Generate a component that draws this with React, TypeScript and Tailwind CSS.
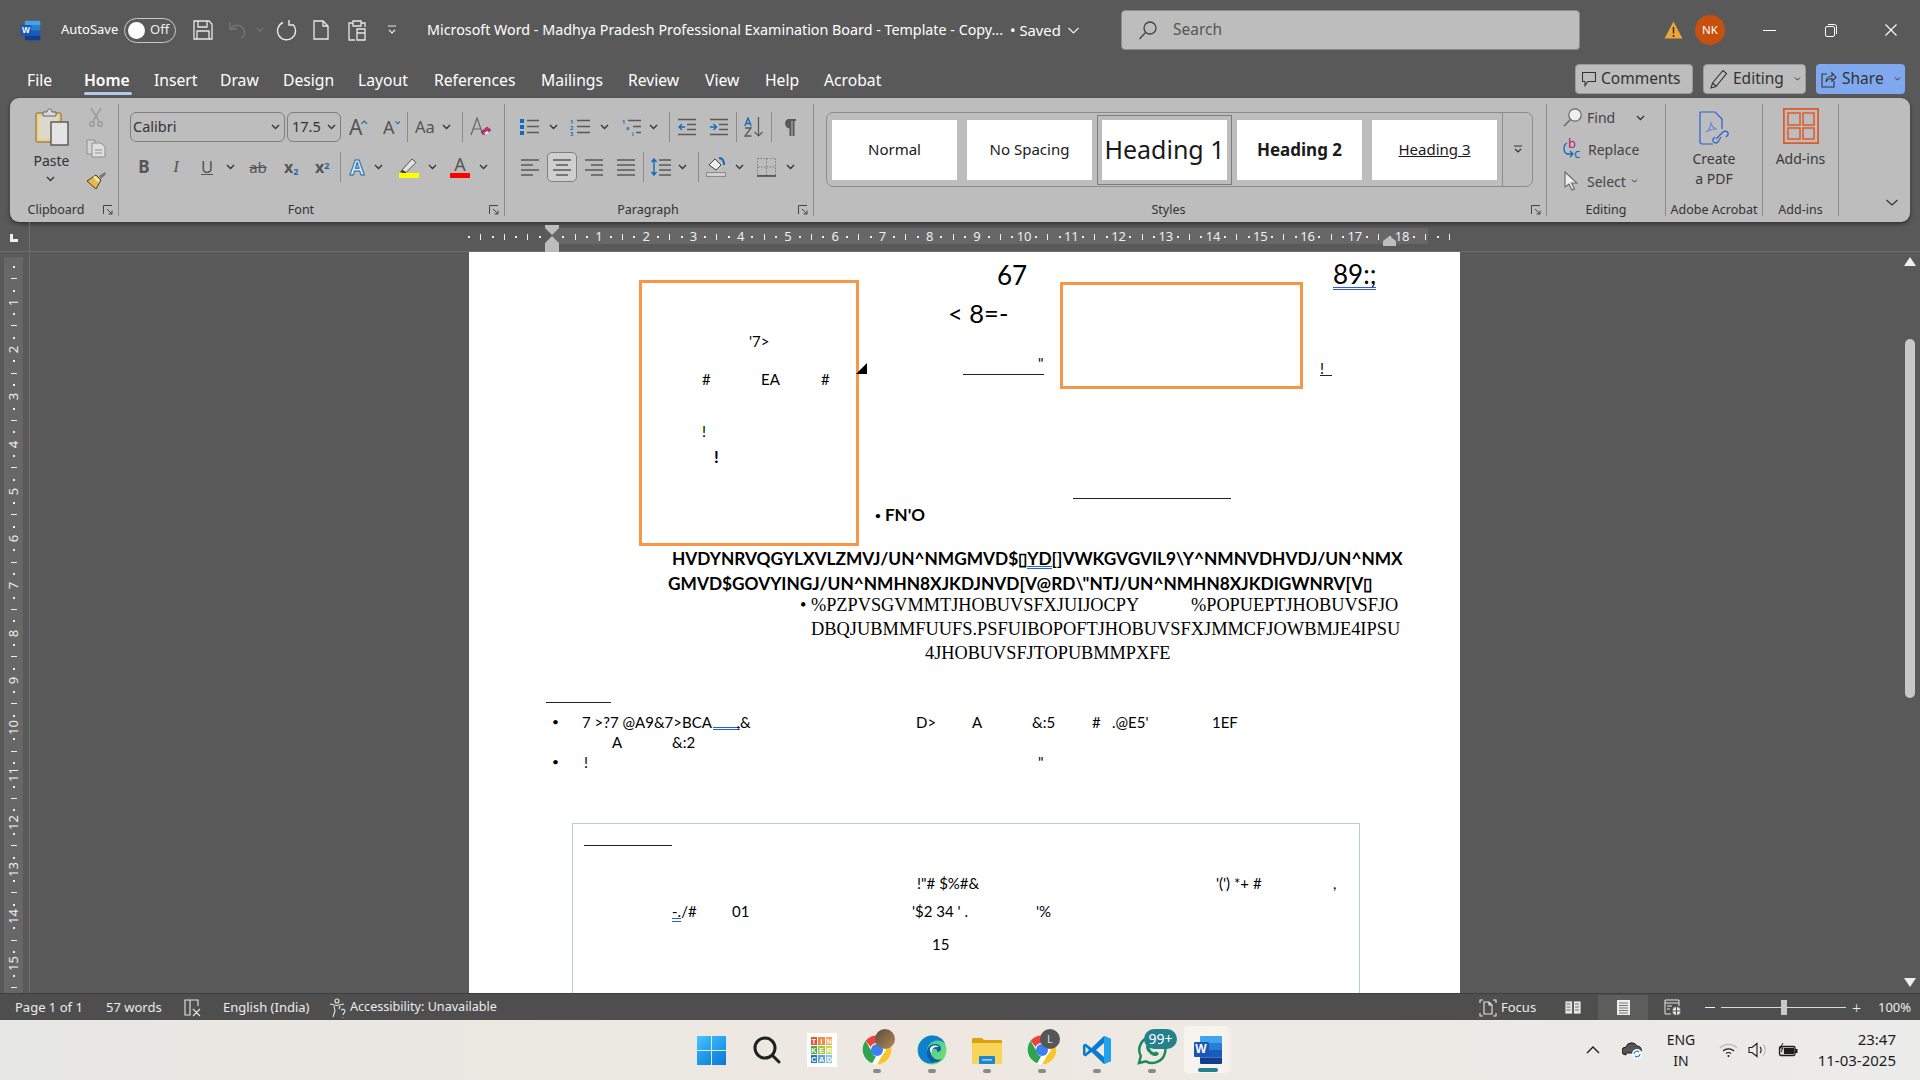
import React from "react";

const Chev = ({ className = "", color = "#333" }: { className?: string; color?: string }) => (
  <svg className={`shrink-0 ${className}`} width="9" height="6" viewBox="0 0 9 6">
    <path d="M1 1l3.5 3.5L8 1" fill="none" stroke={color} strokeWidth="1.3" />
  </svg>
);

const Sep = ({ className = "" }: { className?: string }) => (
  <div className={`w-px h-[30px] shrink-0 bg-[#8c8c8c] ${className}`} />
);

const Launcher = () => (
  <svg width="10" height="10" viewBox="0 0 10 10" className="shrink-0">
    <path d="M0.5 9V0.5H9M4 4l5 5M9 5.5V9H5.5" fill="none" stroke="#444" strokeWidth="1" />
  </svg>
);

const WordLogo = ({ size = 30 }: { size?: number }) => (
  <div className="relative shrink-0" style={{ width: size, height: size }}>
    <svg width={size} height={size} viewBox="0 0 30 30">
      <rect x="7" y="1" width="22" height="7" rx="1" fill="#41a5ee" />
      <rect x="7" y="8" width="22" height="7.5" fill="#2b7cd3" />
      <rect x="7" y="15" width="22" height="7.5" fill="#185abd" />
      <path d="M7 22.5h22V28a1 1 0 0 1-1 1H8a1 1 0 0 1-1-1z" fill="#103f91" />
      <rect x="1" y="7" width="15" height="15" rx="1.2" fill="#1a56b5" />
    </svg>
    <span
      className="absolute text-white font-bold font-['Liberation_Sans',sans-serif] leading-none left-[3%] top-[29%] w-[50%] text-center"
      style={{ fontSize: size * 0.4 }}
    >
      W
    </span>
  </div>
);

const Chrome = () => (
  <svg width="30" height="30" viewBox="0 0 30 30">
    <circle cx="15" cy="15" r="14.5" fill="#fff" />
    <path d="M15 .5A14.5 14.5 0 0 1 27.6 8H15a7 7 0 0 0-6.4 4L3.6 5.8A14.5 14.5 0 0 1 15 .5z" fill="#e8453c" />
    <path d="M3.6 5.8l6.2 10.8a5.6 5.6 0 0 0 4.2 5l-3.8 6.6A14.5 14.5 0 0 1 3.6 5.8z" fill="#2fa34f" />
    <path d="M27.6 8A14.5 14.5 0 0 1 15 29.5l6-10.4a6.5 6.5 0 0 0-.4-11.1z" fill="#f8c52c" />
    <circle cx="15" cy="15" r="6" fill="#3d7ff0" />
  </svg>
);

const Edge = () => (
  <svg width="30" height="30" viewBox="0 0 30 30">
    <defs>
      <linearGradient id="edgeA" x1="0" y1="0" x2="1" y2="1">
        <stop offset="0" stopColor="#2fc3a6" />
        <stop offset="1" stopColor="#7be26b" />
      </linearGradient>
    </defs>
    <circle cx="15" cy="15" r="14.5" fill="url(#edgeA)" />
    <path d="M1 15C1 7 8 .5 15 .5c6 0 11 3 13 8-3-3-8-4-12-2-4 2-6 5-6 9 0 5 3 10 8 12.5C8 30 1 24 1 15z" fill="#0f7fd0" />
    <path d="M10 17c0-5 4-8 8-8 4 0 6 2.500 6 5 0 2-2 3-4 3 1-3-2-4-4-3-2 1-3 4-1 7 2 3 6 5 10 3-2 2-5 4-9 3.500-4-1-6-6-6-10.500z" fill="#0d5fa8" />
    <path d="M14 12c2-2 6-2 8 0-2-.5-5 0-6.500 2-1 1.500-1.500 3-.5 5-2-2-3-5-1-7z" fill="#fff" />
  </svg>
);

const Folder = () => (
  <svg width="30" height="30" viewBox="0 0 30 30">
    <path d="M0 4a1 1 0 0 1 1-1h9l3 3h-13z" fill="#dfa10c" />
    <rect x="0" y="5" width="30" height="24" rx="1" fill="#dfa10c" />
    <rect x="0" y="8" width="30" height="21" rx="1" fill="#f7d45a" />
    <rect x="7" y="21" width="16" height="8" rx="1" fill="#1a87d6" />
    <rect x="10" y="24" width="10" height="1.6" fill="#fff" opacity="0.6" />
  </svg>
);

const VsCode = () => (
  <svg width="30" height="30" viewBox="0 0 30 30">
    <path d="M22 1L9.500 13 3.500 8.500 1 10v10l2.500 1.500 6-4.500L22 29l7-3V4z" fill="#0a7ccf" />
    <path d="M22 1l7 3v22l-7 3V21l-8-6 8-6z" fill="#21a3ec" />
    <path d="M22 8v14l-8-7z" fill="#f0e9e2" />
    <path d="M3.500 11.500v7L7 15z" fill="#f0e9e2" />
  </svg>
);

const WhatsApp = () => (
  <svg width="30" height="30" viewBox="0 0 30 30">
    <path d="M2 28l1.800-7A13 13 0 1 1 9 26.300z" fill="none" stroke="#1e8a5c" strokeWidth="2.500" />
    <path d="M10 9c1-1 2-1 2.500 0l1 2.500-1 1.500c1 2 2.500 3.500 4.500 4.500l1.500-1 2.500 1c1 .5 1 1.500 0 2.500-1.500 1.500-4 1.500-7-.5-3-2-5-5-5-7.500 0-1 .5-2 1-3z" fill="#1e8a5c" />
  </svg>
);

const Tinkercad = () => {
  const cells = [
    ["T", "#e8503a"], ["I", "#f08a3c"], ["N", "#f2a65a"],
    ["K", "#4fa845"], ["E", "#9cc93d"], ["R", "#c7d94f"],
    ["C", "#2a78b8"], ["A", "#62a6d8"], ["D", "#8cc2e8"],
  ] as const;
  return (
    <div className="w-[30px] h-[34px] bg-white grid grid-cols-3 grid-rows-3 gap-[1px] p-[4px] shrink-0">
      {cells.map(([t, c]) => (
        <span key={t} className="flex items-center justify-center text-white text-[7px] font-bold leading-none font-['Liberation_Sans',sans-serif]" style={{ backgroundColor: c }}>
          {t}
        </span>
      ))}
    </div>
  );
};

const TaskCell = ({ children, dot = true }: { children: React.ReactNode; dot?: boolean }) => (
  <div className="relative w-[55px] h-full flex items-center justify-center shrink-0">
    {children}
    {dot && <div className="absolute bottom-[7px] left-[24px] w-[8px] h-[4px] rounded-full bg-[#8c8a88]" />}
  </div>
);

const TABS = [
  ["File", "w-[57px]"], ["Home", "w-[70px]"], ["Insert", "w-[66px]"], ["Draw", "w-[63px]"], ["Design", "w-[75px]"],
  ["Layout", "w-[76px]"], ["References", "w-[107px]"], ["Mailings", "w-[87px]"], ["Review", "w-[77px]"], ["View", "w-[60px]"],
  ["Help", "w-[59px]"], ["Acrobat", "w-[70px]"],
];

function TitleBar() {
  return (
    <div className="flex items-center h-[60px] text-white shrink-0">
      <div className="ml-[20px]"><WordLogo size={21} /></div>
      <span className="ml-[20px] w-[54px] text-[13px] whitespace-nowrap">AutoSave</span>
      <div className="ml-[9px] w-[52px] h-[25px] rounded-full border border-[#c9c9c9] flex items-center pl-[3px] shrink-0">
        <div className="w-[17px] h-[17px] rounded-full bg-white" />
        <span className="ml-[5px] text-[13px] text-[#eee]">Off</span>
      </div>
      <svg className="ml-[17px] shrink-0" width="20" height="20" viewBox="0 0 20 20" fill="none" stroke="#e8e8e8" strokeWidth="1.3">
        <path d="M1 1h15l3 3v15H1zM5 1v6h9V1M4 19v-8h12v8" />
      </svg>
      <svg className="ml-[15px] shrink-0" width="20" height="20" viewBox="0 0 20 20" fill="none" stroke="#757575" strokeWidth="1.4">
        <path d="M2 2v7h7M2.500 9C5 5 11 4 14.500 7.500c3.500 3.500 2.500 8-1 11" />
      </svg>
      <Chev className="ml-[8px] w-[8px]" color="#757575" />
      <svg className="ml-[12px] shrink-0" width="21" height="22" viewBox="0 0 21 22" fill="none" stroke="#e8e8e8" strokeWidth="1.4">
        <path d="M13 1v5h5M17 5.500A9 9 0 1 1 7 3.500" />
      </svg>
      <svg className="ml-[16px] shrink-0" width="16" height="20" viewBox="0 0 16 20" fill="none" stroke="#e8e8e8" strokeWidth="1.3">
        <path d="M1 1h9l5 5v13H1zM10 1v5h5" />
      </svg>
      <svg className="ml-[19px] shrink-0" width="18" height="21" viewBox="0 0 18 21" fill="none" stroke="#e8e8e8" strokeWidth="1.3">
        <path d="M5 3H1v17h6M13 3h4v4M5 1h8v5H5zM9 9h8v11H9zM9 13h8" />
      </svg>
      <svg className="ml-[22px] shrink-0" width="8" height="10" viewBox="0 0 8 10" fill="none" stroke="#e8e8e8" strokeWidth="1.2">
        <path d="M0 1h8M1 5l3 3 3-3" />
      </svg>
      <div className="ml-[31px] w-[694px] flex items-center text-[14.3px] whitespace-nowrap shrink-0">
        <span className="w-[583px] shrink-0">Microsoft Word - Madhya Pradesh Professional Examination Board - Template - Copy...</span>
        <span className="w-[58px] shrink-0 text-[14.8px]">•&nbsp;Saved</span>
        <svg width="11" height="7" viewBox="0 0 11 7" fill="none" stroke="#eee" strokeWidth="1.2"><path d="M.5 1l5 5 5-5" /></svg>
      </div>
      <div className="w-[459px] h-[40px] rounded-[4px] bg-[#bdbdbd] border border-[#8b8b8b] flex items-center pl-[16px] shrink-0">
        <svg width="20" height="20" viewBox="0 0 20 20" fill="none" stroke="#444" strokeWidth="1.3">
          <circle cx="12" cy="8" r="6" />
          <path d="M7.500 12.500L1.500 19" />
        </svg>
        <span className="ml-[15px] text-[15.5px] text-[#555]">Search</span>
      </div>
      <svg className="ml-[84px] shrink-0" width="19" height="18" viewBox="0 0 19 18">
        <path d="M9.500 .5L18.500 17.500H.5z" fill="#eda63a" />
        <path d="M9.500 6v6.500M9.500 14v2" stroke="#3d2c10" strokeWidth="1.500" />
      </svg>
      <div className="ml-[12px] w-[30px] h-[30px] rounded-full bg-[#c8500f] flex items-center justify-center text-[11.5px] text-white shrink-0">NK</div>
      <div className="ml-[38px] w-[13px] h-px bg-white shrink-0" />
      <svg className="ml-[49px] shrink-0" width="12" height="13" viewBox="0 0 12 13" fill="none" stroke="#fff" strokeWidth="1">
        <rect x=".5" y="2.500" width="9" height="10" rx="1.500" />
        <path d="M3 .5h6.500a2 2 0 0 1 2 2V10" />
      </svg>
      <svg className="ml-[48px] shrink-0" width="12" height="12" viewBox="0 0 12 12" stroke="#fff" strokeWidth="1.1">
        <path d="M.5 .5l11 11M11.500 .5l-11 11" />
      </svg>
    </div>
  );
}

function TabRow() {
  return (
    <div className="flex h-[38px] pl-[27px] text-white text-[15.7px] shrink-0">
      {TABS.map(([t, w]) => (
        <div key={t} className={`relative h-full flex items-center pt-[3px] shrink-0 ${w} ${t === "Home" ? "font-semibold" : ""}`}>
          {t}
          {t === "Home" && <div className="absolute left-0 bottom-[3px] w-[48px] h-[3px] rounded-full bg-[#b5c9ee]" />}
        </div>
      ))}
      <div className="ml-auto flex mt-[4px] pr-[15px] gap-[10px] h-[30px] text-[15.5px] text-[#333]">
        <div className="w-[118px] rounded-[4px] bg-[#bdbdbd] border border-[#9a9a9a] flex items-center pl-[6px] gap-[5px]">
          <svg width="14" height="16" viewBox="0 0 14 16" fill="none" stroke="#333" strokeWidth="1.1"><path d="M.5 1.500h13v9H6l-3 4v-4H.5z" /></svg>
          Comments
        </div>
        <div className="w-[103px] rounded-[4px] bg-[#bdbdbd] border border-[#9a9a9a] flex items-center pl-[6px] gap-[5px]">
          <svg width="18" height="20" viewBox="0 0 18 20" fill="none" stroke="#333" strokeWidth="1.1"><path d="M1 19l1.500-5L13 1.500l3.500 3L6 17.500zM2.500 14L6 17" /></svg>
          Editing
          <Chev className="ml-[4px] scale-75" />
        </div>
        <div className="w-[89px] rounded-[4px] bg-[#7fa8ee] flex items-center pl-[5px] gap-[5px]">
          <svg width="16" height="18" viewBox="0 0 16 18" fill="none" stroke="#333" strokeWidth="1.1"><path d="M6 4H1v13h12v-6M5 12c0-4 3-6 6-6V3l4 4.500L11 11V8.500c-3 0-5 1-6 3.500z" /></svg>
          Share
          <Chev className="ml-[4px] scale-75" />
        </div>
      </div>
    </div>
  );
}

const GroupLabel = ({ text, box }: { text: string; box?: string }) => (
  <div className="mt-auto flex h-[12px] items-center text-[12.5px] leading-[12px] text-[#333]">
    <span className="flex-1 text-center whitespace-nowrap">{text}</span>
    {box && (
      <span className={`flex justify-end pr-[5px] shrink-0 ${box}`}>
        <Launcher />
      </span>
    )}
  </div>
);

function Clipboard() {
  return (
    <div className="w-[109px] flex flex-col border-r border-[#8c8c8c] shrink-0">
      <div className="flex">
        <div className="w-[74px] pl-[9px] pt-[4px] flex flex-col items-center shrink-0">
          <svg width="34" height="39" viewBox="0 0 34 39">
            <rect x="1" y="5" width="25" height="29" rx="1" fill="#f2cf7f" stroke="#7d6a3c" />
            <rect x="4" y="8" width="19" height="23" fill="#ddd8cc" />
            <path d="M8 8V4h4c0-4 5-4 5 0h4v4z" fill="#d8d8d8" stroke="#666" />
            <rect x="16" y="14" width="17" height="23" fill="#e4e4e4" stroke="#5d5d5d" strokeWidth="1.500" />
          </svg>
          <span className="mt-[4px] text-[14px] leading-[20px] text-[#333]">Paste</span>
          <Chev className="mt-[5px] mr-[3px]" />
        </div>
        <div className="w-[24px] pt-[3px] flex flex-col items-center shrink-0">
          <svg width="14" height="20" viewBox="0 0 14 20" fill="none" stroke="#8e8e8e" strokeWidth="1.100">
            <path d="M2 1l8 13M12 1L4 14" />
            <circle cx="3" cy="17" r="2.300" />
            <circle cx="11" cy="17" r="2.300" />
          </svg>
          <svg className="mt-[12px]" width="20" height="19" viewBox="0 0 20 19">
            <path d="M1 1h8v14H1z" fill="#d4d4d4" stroke="#8e8e8e" />
            <path d="M6 4h9l4 4v10H6z" fill="#dfdfdf" stroke="#8e8e8e" />
            <path d="M9 11h7M9 14h7" stroke="#8e8e8e" />
          </svg>
          <svg className="mt-[13px]" width="20" height="18" viewBox="0 0 20 18">
            <path d="M13 5L19 1l1 2-5 5z" fill="#777" />
            <path d="M1 10l9-6 5 5-5 9z" fill="#e6b94a" stroke="#4a3a18" />
            <path d="M8 5.500l5 5" stroke="#eee" strokeWidth="2" />
          </svg>
        </div>
      </div>
      <GroupLabel text="Clipboard" box="w-[16px]" />
    </div>
  );
}

function FontGroup() {
  return (
    <div className="w-[386px] flex flex-col border-r border-[#8c8c8c] shrink-0 text-[#555]">
      <div className="pt-[8px] flex flex-col gap-[10px]">
        <div className="flex items-center h-[30px]">
          <div className="ml-[11px] w-[155px] h-[30px] rounded-[6px] border border-[#808080] flex items-center px-[2px] justify-between shrink-0">
            <span className="text-[14.5px] text-[#333]">Calibri</span>
            <Chev className="mr-[2px]" />
          </div>
          <div className="ml-[2px] w-[54px] h-[30px] rounded-[6px] border border-[#808080] flex items-center pl-[4px] pr-[2px] justify-between shrink-0">
            <span className="text-[14.5px] text-[#333]">17.5</span>
            <Chev className="mr-[2px]" />
          </div>
          <div className="ml-[8px] w-[19px] flex items-start shrink-0">
            <span className="text-[21px] leading-none">A</span>
            <svg className="mt-[3px] ml-[-1px]" width="7" height="5" viewBox="0 0 7 5"><path d="M.5 4l3-3 3 3" fill="none" stroke="#1f6aa8" strokeWidth="1.300" /></svg>
          </div>
          <div className="ml-[15px] w-[17px] flex items-start shrink-0">
            <span className="text-[18px] leading-none">A</span>
            <svg className="mt-[2px]" width="7" height="5" viewBox="0 0 7 5"><path d="M.5 1l3 3 3-3" fill="none" stroke="#1f6aa8" strokeWidth="1.300" /></svg>
          </div>
          <Sep className="ml-[7px]" />
          <span className="ml-[7px] w-[20px] text-[16.5px] shrink-0 whitespace-nowrap">Aa</span>
          <Chev className="ml-[7px]" />
          <Sep className="ml-[11px]" />
          <svg className="ml-[7px] shrink-0" width="21" height="20" viewBox="0 0 21 20">
            <path d="M1 18L7 1l6 17M3.500 12h7" fill="none" stroke="#666" strokeWidth="1.200" />
            <path d="M11 15l6-5 4 3-6 5z" fill="#c0307e" stroke="#7c1c50" strokeWidth=".6" />
            <path d="M14 16.500l3-2.500 2 1.500-3 2.500z" fill="#eee" />
          </svg>
        </div>
        <div className="flex items-center h-[30px]">
          <span className="ml-[18px] w-[14px] text-center text-[17px] font-bold shrink-0">B</span>
          <span className="ml-[18px] w-[14px] text-center text-[17px] italic shrink-0 font-['Liberation_Serif',serif]">I</span>
          <span className="ml-[17px] w-[14px] text-center text-[16.5px] underline shrink-0">U</span>
          <Chev className="ml-[12px]" />
          <span className="ml-[13px] w-[20px] text-center text-[15px] line-through shrink-0">ab</span>
          <span className="ml-[16px] w-[16px] text-[16px] font-bold shrink-0 whitespace-nowrap">x<sub className="text-[9px] text-[#1f6aa8]">2</sub></span>
          <span className="ml-[15px] w-[16px] text-[16px] font-bold shrink-0 whitespace-nowrap">x<sup className="text-[9px] text-[#1f6aa8]">2</sup></span>
          <Sep className="ml-[9px]" />
          <span className="ml-[7px] w-[18px] text-center text-[21px] font-bold text-[#dfeaf5] leading-none shrink-0 [-webkit-text-stroke:1px_#1f6aa8]">A</span>
          <Chev className="ml-[8px]" />
          <svg className="ml-[16px] shrink-0" width="20" height="21" viewBox="0 0 20 21">
            <path d="M3 13L13 2l4 3.500L7 15.500z" fill="#e2e2e2" stroke="#555" />
            <path d="M1 15l2-2 4 2.500-1 1z" fill="#333" />
            <rect x="0" y="16" width="20" height="5" fill="#ffff00" />
          </svg>
          <Chev className="ml-[9px]" />
          <div className="ml-[13px] w-[20px] flex flex-col items-center shrink-0">
            <span className="text-[18px] leading-[17px]">A</span>
            <div className="w-[20px] h-[5px] bg-[#ff0000]" />
          </div>
          <Chev className="ml-[9px]" />
        </div>
      </div>
      <GroupLabel text="Font" box="w-[21px]" />
    </div>
  );
}

function ParagraphGroup() {
  return (
    <div className="w-[309px] flex flex-col border-r border-[#8c8c8c] shrink-0 text-[#555]">
      <div className="pt-[8px] flex flex-col gap-[10px]">
        <div className="flex items-center h-[30px]">
          <svg className="ml-[15px] shrink-0" width="19" height="18" viewBox="0 0 19 18">
            <path d="M0 1h4v4H0zM0 7h4v4H0zM0 13h4v4H0z" fill="#0f6cbd" />
            <path d="M7 2.500h12M7 8.500h12M7 14.500h12" stroke="#595959" strokeWidth="1.500" />
          </svg>
          <Chev className="ml-[10px]" />
          <svg className="ml-[12px] shrink-0" width="20" height="18" viewBox="0 0 20 18">
            <text x="0" y="5.500" fontSize="5.500" fontWeight="700" fill="#0f6cbd">1</text>
            <text x="0" y="11.500" fontSize="5.500" fontWeight="700" fill="#0f6cbd">2</text>
            <text x="0" y="17.500" fontSize="5.500" fontWeight="700" fill="#0f6cbd">3</text>
            <path d="M7 2.500h13M7 8.500h13M7 14.500h13" stroke="#595959" strokeWidth="1.500" />
          </svg>
          <Chev className="ml-[10px]" />
          <svg className="ml-[13px] shrink-0" width="19" height="18" viewBox="0 0 19 18">
            <text x="0" y="5.500" fontSize="5.500" fontWeight="700" fill="#0f6cbd">1</text>
            <text x="4" y="11.500" fontSize="5.500" fontWeight="700" fill="#0f6cbd">a</text>
            <text x="10" y="17.500" fontSize="5.500" fontWeight="700" fill="#0f6cbd">i</text>
            <path d="M6 2.500h13M11 8.500h8M14 14.500h5" stroke="#595959" strokeWidth="1.500" />
          </svg>
          <Chev className="ml-[8px]" />
          <Sep className="ml-[11px]" />
          <svg className="ml-[8px] shrink-0" width="18" height="18" viewBox="0 0 18 18">
            <path d="M0 1.500h18M9 6.500h9M9 11.500h9M0 16.500h18" stroke="#595959" strokeWidth="1.500" />
            <path d="M7 9H1M4 6L1 9l3 3" fill="none" stroke="#0f6cbd" strokeWidth="1.300" />
          </svg>
          <svg className="ml-[14px] shrink-0" width="18" height="18" viewBox="0 0 18 18">
            <path d="M0 1.500h18M9 6.500h9M9 11.500h9M0 16.500h18" stroke="#595959" strokeWidth="1.500" />
            <path d="M0 9h6M3.500 6l3 3-3 3" fill="none" stroke="#0f6cbd" strokeWidth="1.300" />
          </svg>
          <Sep className="ml-[8px]" />
          {/* sort button, same idea as lucide's arrow-down-a-z */}
          <svg className="ml-[7px] shrink-0" width="20" height="20" viewBox="0 0 20 20" fill="none" strokeWidth="1.300">
            <path d="M.8 9L4 1l3.200 8M1.800 6.500h4.400" stroke="#0f6cbd" />
            <path d="M1 11h6L1 19h6.500" stroke="#595959" />
            <path d="M14.500 0v19M10.500 15l4 4 4-4" stroke="#595959" strokeWidth="1.200" />
          </svg>
          <Sep className="ml-[7px]" />
          <svg className="ml-[10px] shrink-0" width="14" height="17" viewBox="0 0 14 17">
            <path d="M6 0h8v2h-1.500v15h-2V2h-1v15h-2V9.500A5 5 0 0 1 6 0z" fill="#595959" />
          </svg>
        </div>
        <div className="flex items-center h-[30px]">
          <svg className="ml-[16px] shrink-0" width="18" height="18" viewBox="0 0 18 18">
            <path d="M0 2h18M0 7h12M0 12h18M0 17h12" stroke="#595959" strokeWidth="1.500" />
          </svg>
          <div className="ml-[8px] w-[30px] h-[30px] rounded-[5px] border border-[#808080] bg-[#cfcfcf] flex items-center justify-center shrink-0">
            <svg width="18" height="18" viewBox="0 0 18 18">
              <path d="M0 2h18M3 7h12M0 12h18M3 17h12" stroke="#595959" strokeWidth="1.500" />
            </svg>
          </div>
          <svg className="ml-[8px] shrink-0" width="18" height="18" viewBox="0 0 18 18">
            <path d="M0 2h18M6 7h12M0 12h18M6 17h12" stroke="#595959" strokeWidth="1.500" />
          </svg>
          <svg className="ml-[14px] shrink-0" width="18" height="18" viewBox="0 0 18 18">
            <path d="M0 2h18M0 7h18M0 12h18M0 17h18" stroke="#595959" strokeWidth="1.500" />
          </svg>
          <Sep className="ml-[8px]" />
          <svg className="ml-[7px] shrink-0" width="20" height="18" viewBox="0 0 20 18">
            <path d="M8 2h12M8 7h12M8 12h12M8 17h12" stroke="#595959" strokeWidth="1.500" />
            <path d="M3 1v16M.5 4L3 1l2.500 3M.5 14L3 17l2.500-3" fill="none" stroke="#0f6cbd" strokeWidth="1.400" />
          </svg>
          <Chev className="ml-[7px]" />
          <Sep className="ml-[11px]" />
          <svg className="ml-[7px] shrink-0" width="20" height="20" viewBox="0 0 20 20">
            <path d="M3 8l6-6 6 6-5 5z" fill="#eee" stroke="#444" />
            <path d="M13 1c3 0 5 2 5 7" fill="none" stroke="#0f6cbd" strokeWidth="2" />
            <rect x=".5" y="15.500" width="19" height="4" fill="#cfcfcf" stroke="#8c8c8c" />
          </svg>
          <Chev className="ml-[9px]" />
          <svg className="ml-[13px] shrink-0" width="19" height="19" viewBox="0 0 19 19" fill="none">
            <rect x=".5" y=".5" width="18" height="17" stroke="#7a7a7a" strokeDasharray="1.500 1.500" />
            <path d="M9.500 1v17M1 9h18" stroke="#7a7a7a" strokeDasharray="1.500 1.500" />
            <path d="M0 18h19" stroke="#444" strokeWidth="1.500" />
          </svg>
          <Chev className="ml-[10px]" />
        </div>
      </div>
      <GroupLabel text="Paragraph" box="w-[22px]" />
    </div>
  );
}

const STYLE_CELLS = [
  { label: "Normal", cls: "text-[15px]" },
  { label: "No Spacing", cls: "text-[15px]" },
  { label: "Heading 1", cls: "text-[25px] outline outline-[1.5px] outline-offset-4 outline-[#7d7d7d]" },
  { label: "Heading 2", cls: "text-[17px] font-bold" },
  { label: "Heading 3", cls: "text-[15px] underline" },
];

function StylesGroup() {
  return (
    <div className="w-[733px] flex flex-col border-r border-[#8c8c8c] shrink-0">
      <div className="pt-[8px] pl-[12px]">
        <div className="w-[707px] h-[75px] rounded-[7px] border border-[#8c8c8c] flex items-center pl-[5px]">
          <div className="flex gap-[10px]">
            {STYLE_CELLS.map((s) => (
              <div key={s.label} className={`w-[125px] h-[60px] bg-white flex items-center justify-center text-[#1a1a1a] whitespace-nowrap ${s.cls}`}>
                {s.label}
              </div>
            ))}
          </div>
          <div className="ml-[5px] flex-1 h-full border-l border-[#8c8c8c] flex items-center justify-center">
            <svg width="10" height="9" viewBox="0 0 10 9" fill="none" stroke="#333" strokeWidth="1.200"><path d="M1 1h8M2 4l3 3 3-3" /></svg>
          </div>
        </div>
      </div>
      <GroupLabel text="Styles" box="w-[23px]" />
    </div>
  );
}

function EditingGroup() {
  return (
    <div className="w-[119px] flex flex-col border-r border-[#8c8c8c] shrink-0 text-[14px] text-[#444]">
      <div className="flex items-center h-[27px] pl-[16px]">
        <svg className="shrink-0" width="19" height="19" viewBox="0 0 19 19">
          <circle cx="12" cy="7" r="6.200" fill="#eee" stroke="#666" strokeWidth="1.200" />
          <path d="M7.500 11.500L1 18" stroke="#666" strokeWidth="1.500" />
        </svg>
        <span className="ml-[5px] w-[49px] shrink-0">Find</span>
        <Chev />
      </div>
      <div className="flex items-center h-[28px] mt-[4px] pl-[15px]">
        <div className="relative w-[20px] h-[20px] shrink-0">
          <span className="absolute left-[6px] top-[-6px] text-[13px] text-[#b0267a] leading-[20px]">b</span>
          <span className="absolute left-[12px] top-[4px] text-[13px] text-[#0f6cbd] leading-[20px]">c</span>
          <svg className="absolute left-0 top-[3px]" width="13" height="16" viewBox="0 0 13 16" fill="none" stroke="#0f6cbd" strokeWidth="1.300"><path d="M5 1C1 3 1 10 5 12h6M8 9l3 3-3 3" /></svg>
        </div>
        <span className="ml-[6px]">Replace</span>
      </div>
      <div className="flex items-center h-[28px] mt-[4px] pl-[17px]">
        <svg className="shrink-0" width="14" height="20" viewBox="0 0 14 20">
          <path d="M1 1v15l4-3 3 6 2.500-1-3-6H13z" fill="#eee" stroke="#666" strokeWidth="1.100" />
        </svg>
        <span className="ml-[9px]">Select</span>
        <Chev className="ml-[4px] scale-75" />
      </div>
      <GroupLabel text="Editing" />
    </div>
  );
}

function RulerTop() {
  const cells = Array.from({ length: 84 }, (_, i) => i - 7);
  return (
    <div className="relative flex h-[30px] border-b border-[#6e6e6e] shrink-0">
      <div className="w-[30px] border-r border-[#6e6e6e] shrink-0 pl-[10px] pt-[12px]">
        <div className="w-[8px] h-[8px] border-l-[3px] border-b-[3px] border-[#eee]" />
      </div>
      <div className="absolute left-[551px] top-[6px] w-[877px] h-[16px] bg-[#676767]" />
      <div className="relative flex items-center pl-[433px] text-[#eee] text-[13px] leading-none">
        {cells.map((r) => (
          <div key={r} className="w-[11.82px] flex items-center justify-center shrink-0">
            {r === 0 ? null : r % 4 === 0 && r > 0 && r <= 72 ? (
              <span>{r / 4}</span>
            ) : r % 2 === 0 ? (
              <div className="w-px h-[6px] bg-[#eee]" />
            ) : (
              <div className="w-[2px] h-[2px] bg-[#eee]" />
            )}
          </div>
        ))}
      </div>
      <svg className="absolute left-[545px] top-[3px]" width="14" height="27" viewBox="0 0 14 27" fill="#bdbdbd">
        <path d="M0 0h14v3L7 10 0 3zM7 11l7 7v5H0v-5z" />
        <rect x="0" y="21" width="14" height="6" />
      </svg>
      <svg className="absolute left-[1383px] top-[14px]" width="13" height="10" viewBox="0 0 13 10" fill="#bdbdbd">
        <path d="M6.500 0L13 5v5H0V5z" />
      </svg>
    </div>
  );
}

function RulerLeft() {
  const cells = Array.from({ length: 62 }, (_, i) => i + 1);
  return (
    <div className="w-[30px] border-r border-[#6e6e6e] pl-[4px] pt-[5px] shrink-0 flex flex-col">
      <div className="w-[19px] flex-1 bg-[#676767] pt-[4px] overflow-hidden flex flex-col items-center text-[#eee] text-[13px] leading-none">
        {cells.map((r) => (
          <div key={r} className="h-[11.82px] w-full flex items-center justify-center shrink-0">
            {r % 4 === 0 ? (
              <span className="-rotate-90">{r / 4}</span>
            ) : r % 2 === 0 ? (
              <div className="w-[6px] h-px bg-[#eee]" />
            ) : (
              <div className="w-[2px] h-[2px] bg-[#eee]" />
            )}
          </div>
        ))}
      </div>
    </div>
  );
}

const Rule = ({ className = "" }: { className?: string }) => <div className={`h-px bg-[#222] shrink-0 ${className}`} />;

const DoubleLine = "border-b-[3px] border-double border-[#2a5fd0]";

function Page() {
  return (
    <div className="w-[991px] ml-[439px] bg-white text-black font-['Lato',sans-serif] text-[15px] flex flex-col overflow-hidden whitespace-pre shrink-0">
      {/* floating frames at the top */}
      <div className="flex h-[294px] shrink-0">
        <div className="relative ml-[170px] mt-[28px] w-[220px] h-[266px] border-[3px] border-[#f79646] shrink-0 flex flex-col">
          <div className="h-[18px] mt-[47px] pl-[107px]">'7&gt;</div>
          <div className="h-[18px] mt-[20px] pl-[60px] flex">
            <span className="w-[59px]">#</span>
            <span className="w-[60px]">EA</span>
            <span>#</span>
          </div>
          <div className="h-[18px] mt-[34px] pl-[60px]">!</div>
          <div className="h-[18px] mt-[6px] pl-[72px] font-bold text-[17px]">!</div>
          <svg className="absolute left-[214px] top-[80px]" width="11" height="11" viewBox="0 0 11 11"><path d="M11 0v11H0z" fill="#000" /></svg>
        </div>
        <div className="w-[201px] shrink-0 flex flex-col">
          <div className="h-[46px] pl-[138px] text-[26px] leading-[46px]">67</div>
          <div className="h-[30px] pl-[89px] text-[25.5px] leading-[30px]">&lt; 8=-</div>
          <div className="h-[14px] mt-[28px] pl-[179px] leading-[14px]">"</div>
          <Rule className="ml-[104px] w-[81px] mt-[4px]" />
          <div className="h-[20px] mt-[130px] pl-[16px] font-bold text-[17px] leading-[20px] flex items-center">
            <span className="w-[10px] text-[10px]">•</span>
            <span>FN'O</span>
          </div>
        </div>
        <div className="w-[243px] shrink-0 flex flex-col">
          <div className="mt-[30px] h-[107px] border-[3px] border-[#f79646] shrink-0" />
          <Rule className="ml-[13px] w-[158px] mt-[109px]" />
        </div>
        <div className="flex flex-col">
          <div className="h-[46px] pl-[30px] leading-[44px] text-[26px]">
            <span className={`inline-block leading-[26px] ${DoubleLine}`}>89:;</span>
          </div>
          <div className="mt-[64px] ml-[17px] h-[14px] w-[12px] border-b border-[#222] leading-[12px]">!</div>
        </div>
      </div>

      <div className="mt-[1px] h-[25px] pl-[203px] font-bold text-[17.3px] leading-[23px] flex">
        <span>HVDYNRVQGYLXVLZMVJ/UN^NMGMVD$▯</span>
        <span className={`inline-block h-[22px] ${DoubleLine}`}>YD</span>
        <span>[]VWKGVGVIL9\Y^NMNVDHVDJ/UN^NMX</span>
      </div>
      <div className="h-[23px] pl-[199px] font-bold text-[17.3px] leading-[23px]">GMVD$GOVYINGJ/UN^NMHN8XJKDJNVD[V@RD\"NTJ/UN^NMHN8XJKDIGWNRV[V▯</div>

      <div className="mt-[-1px] h-[24px] pl-[331px] font-['Liberation_Serif',serif] text-[18.3px] leading-[23px] flex">
        <span className="w-[391px] shrink-0">• %PZPVSGVMMTJHOBUVSFXJUIJOCPY</span>
        <span>%POPUEPTJHOBUVSFJO</span>
      </div>
      <div className="h-[23px] pl-[342px] font-['Liberation_Serif',serif] text-[18.4px] leading-[23px]">DBQJUBMMFUUFS.PSFUIBOPOFTJHOBUVSFXJMMCFJOWBMJE4IPSU</div>
      <div className="mt-[1px] h-[23px] pl-[456px] font-['Liberation_Serif',serif] text-[18.3px] leading-[23px]">4JHOBUVSFJTOPUBMMPXFE</div>

      <Rule className="mt-[37px] ml-[77px] w-[65px]" />

      <div className="mt-[9px] h-[20px] pl-[83px] leading-[20px] flex">
        <span className="w-[30px] shrink-0 text-[12px]">•</span>
        <span className="w-[131px] shrink-0">7 &gt;?7 @A9&amp;7&gt;BCA</span>
        <span className={`w-[27px] h-[18px] shrink-0 text-right ${DoubleLine}`}>,</span>
        <span className="w-[176px] shrink-0">&amp;</span>
        <span className="w-[56px] shrink-0">D&gt;</span>
        <span className="w-[60px] shrink-0">A</span>
        <span className="w-[60px] shrink-0">&amp;:5</span>
        <span className="w-[20px] shrink-0">#</span>
        <span className="w-[100px] shrink-0">.@E5'</span>
        <span>1EF</span>
      </div>
      <div className="h-[20px] pl-[143px] leading-[20px] flex">
        <span className="w-[60px] shrink-0">A</span>
        <span>&amp;:2</span>
      </div>
      <div className="h-[20px] pl-[83px] leading-[20px] flex">
        <span className="w-[32px] shrink-0 text-[12px]">•</span>
        <span className="w-[454px] shrink-0">!</span>
        <span>"</span>
      </div>

      <div className="mt-[51px] ml-[103px] w-[788px] flex-1 border border-b-0 border-[#b5cfd6] flex flex-col">
        <Rule className="ml-[11px] w-[88px] mt-[21px]" />
        <div className="mt-[27px] h-[20px] pl-[344px] leading-[20px] flex">
          <span className="w-[299px] shrink-0">!"# $%#&amp;</span>
          <span className="w-[117px] shrink-0">'(') *+ #</span>
          <span>,</span>
        </div>
        <div className="mt-[8px] h-[20px] pl-[99px] leading-[20px] flex">
          <span className="w-[60px] shrink-0">
            <span className="underline decoration-[#2a5fd0] decoration-double">-.</span>/#
          </span>
          <span className="w-[180px] shrink-0">01</span>
          <span className="w-[124px] shrink-0">'$2 34 ' .</span>
          <span>'%</span>
        </div>
        <div className="mt-[13px] h-[20px] pl-[359px] leading-[20px]">15</div>
      </div>
    </div>
  );
}

function Scrollbar() {
  return (
    <div className="ml-auto w-[20px] shrink-0 flex flex-col items-center">
      <svg className="mt-[5px]" width="12" height="10" viewBox="0 0 12 10"><path d="M6 0l6 9H0z" fill="#eee" /></svg>
      <div className="mt-[72px] w-[10px] h-[359px] rounded-full bg-[#c8c8c8]" />
      <svg className="mt-auto mb-[6px]" width="12" height="10" viewBox="0 0 12 10"><path d="M6 10l6-9H0z" fill="#eee" /></svg>
    </div>
  );
}

function StatusBar() {
  return (
    <div className="flex items-center h-[27px] pt-[1px] bg-[#4e4e4e] text-[#ececec] text-[13px] border-t border-[#3e3e3e] shrink-0 whitespace-nowrap">
      <span className="ml-[15px] w-[91px] shrink-0">Page 1 of 1</span>
      <span className="w-[78px] shrink-0">57 words</span>
      <svg className="shrink-0" width="18" height="18" viewBox="0 0 18 18" fill="none" stroke="#e6e6e6" strokeWidth="1.100">
        <path d="M1 1h5v15H1zM6 1h8v6M9 10l7 7M16 10l-7 7" />
      </svg>
      <span className="ml-[21px] w-[106px] shrink-0">English (India)</span>
      <svg className="shrink-0" width="18" height="20" viewBox="0 0 18 20" fill="none" stroke="#e6e6e6" strokeWidth="1.100">
        <circle cx="8" cy="3" r="2" />
        <path d="M1 6l7 1.500L15 6M5 8l1 5-2 6M11 8l-1 3M12 12c1-1 4-1 4 1s-2 2-2 4M14 19v.5" />
      </svg>
      <span className="ml-[3px] text-[12.6px]">Accessibility: Unavailable</span>

      <div className="ml-auto flex items-center h-full">
        <svg className="shrink-0" width="18" height="18" viewBox="0 0 18 18" fill="none" stroke="#e6e6e6" strokeWidth="1.100">
          <path d="M1 4V1h3M14 1h3v3M17 14v3h-3M4 17H1v-3M5 3h5l3 3v9H5zM10 3v3h3" />
        </svg>
        <span className="ml-[4px] w-[63px] shrink-0">Focus</span>
        <svg className="shrink-0" width="18" height="16" viewBox="0 0 18 16" fill="#e6e6e6" stroke="#4e4e4e" strokeWidth=".8">
          <path d="M1 1h7.500v13H1zM9.500 1H17v13H9.500z" />
          <path d="M2.500 4h4M2.500 7h4M2.500 10h4M11 4h4M11 7h4M11 10h4" />
        </svg>
        <div className="ml-[16px] w-[50px] h-full bg-[#5d5d5d] flex items-center justify-center shrink-0">
          <svg width="15" height="17" viewBox="0 0 15 17" fill="#eee" stroke="#4e4e4e" strokeWidth=".8">
            <rect x=".5" y=".5" width="14" height="16" />
            <path d="M3 4h9M3 6.500h9M3 9h9M3 11.500h9M3 14h9" />
          </svg>
        </div>
        <svg className="ml-[16px] shrink-0" width="18" height="17" viewBox="0 0 18 17" fill="none" stroke="#e6e6e6" strokeWidth="1">
          <path d="M7 15H1V1h14v6M1 4h14M3 7h5M3 10h3" />
          <circle cx="12.500" cy="12" r="4.500" fill="#e6e6e6" stroke="#4e4e4e" />
          <path d="M8 12h9M12.500 7.500v9" stroke="#4e4e4e" />
        </svg>
        <div className="ml-[23px] w-[10px] h-px bg-[#eee] shrink-0" />
        <div className="relative ml-[6px] w-[125px] h-px bg-[#d8d8d8] shrink-0">
          <div className="absolute left-[60px] top-[-7px] w-[6px] h-[15px] bg-[#c8c8c8]" />
        </div>
        <span className="ml-[6px] text-[16px] w-[26px] font-light shrink-0">+</span>
        <span className="w-[42px] shrink-0">100%</span>
      </div>
    </div>
  );
}

function Taskbar() {
  return (
    <div className="flex items-center h-[60px] bg-gradient-to-r from-[#e7e7e3] via-[#eee8e1] to-[#ebebea] shrink-0 text-[#1c1c1c] relative">
      <div className="flex h-full pl-[684px]">
        <TaskCell dot={false}>
          <div className="grid grid-cols-2 gap-[1px] w-[29px] h-[29px]">
            <div className="bg-gradient-to-br from-[#4cc4fb] to-[#1b9df0]" />
            <div className="bg-gradient-to-br from-[#3ab4f6] to-[#1793ea]" />
            <div className="bg-gradient-to-br from-[#2aa8f2] to-[#0f88e0]" />
            <div className="bg-gradient-to-br from-[#1d9bea] to-[#0a78d4]" />
          </div>
        </TaskCell>
        <TaskCell dot={false}>
          <svg width="28" height="28" viewBox="0 0 28 28" fill="none" stroke="#202020" strokeWidth="3">
            <circle cx="12" cy="12" r="10" />
            <path d="M19.500 19.500L26 26" strokeLinecap="round" />
          </svg>
        </TaskCell>
        <TaskCell dot={false}><Tinkercad /></TaskCell>
        <TaskCell>
          <Chrome />
          <div className="absolute left-[26px] top-[9px] w-[20px] h-[20px] rounded-full bg-gradient-to-br from-[#5d4a3a] to-[#b58a5a]" />
        </TaskCell>
        <TaskCell><Edge /></TaskCell>
        <TaskCell><Folder /></TaskCell>
        <TaskCell>
          <Chrome />
          <div className="absolute left-[26px] top-[9px] w-[20px] h-[20px] rounded-full bg-[#565656] text-[#ddd] text-[11px] flex items-center justify-center">L</div>
        </TaskCell>
        <TaskCell><VsCode /></TaskCell>
        <TaskCell>
          <WhatsApp />
          <div className="absolute left-[20px] top-[9px] w-[33px] h-[20px] rounded-full bg-[#24808b] text-white text-[14px] flex items-center justify-center leading-none">99+</div>
        </TaskCell>
        <div className="relative ml-[5px] w-[43px] h-[47px] mt-[6px] rounded-[4px] bg-[#f7f3ee] flex items-center justify-center pl-[4px] shrink-0 shadow-[4px_0_0_#f5f0ea]">
          <WordLogo size={30} />
          <div className="absolute bottom-[1px] left-[14px] w-[20px] h-[4px] rounded-full bg-[#24808b]" />
        </div>
      </div>

      <div className="ml-auto flex items-center pr-[24px]">
        <svg className="shrink-0" width="14" height="8" viewBox="0 0 14 8" fill="none" stroke="#1c1c1c" strokeWidth="1.400"><path d="M1 7l6-6 6 6" /></svg>
        <svg className="ml-[22px] shrink-0" width="21" height="17" viewBox="0 0 21 17">
          <path d="M4 13a4 4 0 0 1 0-8 6 6 0 0 1 11-1 4 4 0 0 1 3 7H4z" fill="#555" stroke="#1c1c1c" />
          <circle cx="15" cy="12" r="5" fill="#fff" />
          <path d="M12 12a3 3 0 0 1 5-2M18 12a3 3 0 0 1-5 2" fill="none" stroke="#1a7fd6" strokeWidth="1.200" />
        </svg>
        <div className="ml-[24px] w-[28px] flex flex-col items-center text-[14px] leading-[21px] shrink-0">
          <span>ENG</span>
          <span>IN</span>
        </div>
        <svg className="ml-[24px] shrink-0" width="19" height="14" viewBox="0 0 19 14" fill="none" stroke="#1c1c1c" strokeWidth="1.200">
          <path d="M1 5a12 12 0 0 1 17 0" stroke="#b8b8b8" />
          <path d="M4 8a8 8 0 0 1 11 0M7 10.500a4 4 0 0 1 5 0" />
          <circle cx="9.500" cy="13" r="1" fill="#1c1c1c" stroke="none" />
        </svg>
        <svg className="ml-[10px] shrink-0" width="19" height="16" viewBox="0 0 19 16" fill="none" stroke="#1c1c1c" strokeWidth="1.100">
          <path d="M1 5.500h3L9 1.500v13l-5-4H1zM12 5c1.500 1.500 1.500 4.500 0 6" />
          <path d="M15 2.500c3 3 3 8 0 11" stroke="#b8b8b8" />
        </svg>
        <svg className="ml-[11px] shrink-0" width="20" height="15" viewBox="0 0 20 15">
          <rect x="1.500" y="3.500" width="15.500" height="9" rx="1.500" fill="#dcd6cc" stroke="#1c1c1c" strokeWidth="1.300" />
          <rect x="6" y="5" width="10" height="6" fill="#1c1c1c" />
          <rect x="17" y="6" width="2.500" height="4" fill="#1c1c1c" />
          <path d="M5 0L2 5h3l-2 4" fill="none" stroke="#1c1c1c" strokeWidth="1" />
        </svg>
        <div className="ml-[20px] w-[78px] flex flex-col items-end text-[15px] leading-[21px] whitespace-nowrap shrink-0">
          <span>23:47</span>
          <span>11-03-2025</span>
        </div>
      </div>
    </div>
  );
}

export default function App() {
  return (
    <div className="w-[1920px] h-[1080px] overflow-hidden flex flex-col bg-[#595959] font-['Noto_Sans',sans-serif]">
      <TitleBar />
      <TabRow />
      <div className="mx-[10px] h-[124px] rounded-[9px] bg-[#bdbdbd] py-[6px] flex shadow-[0_2px_4px_rgba(0,0,0,0.45)] shrink-0">
        <Clipboard />
        <FontGroup />
        <ParagraphGroup />
        <StylesGroup />
        <EditingGroup />
        <div className="w-[97px] flex flex-col items-center border-r border-[#8c8c8c] shrink-0 text-[14px] text-[#3a3a3a]">
          <svg className="mt-[7px] shrink-0" width="31" height="35" viewBox="0 0 31 35" fill="none" stroke="#2a5fd0" strokeWidth="1.200">
            <path d="M14 33H3a2 2 0 0 1-2-2V2a1 1 0 0 1 1-1h14l7 7v10" />
            <path d="M7 21c3-1 5-6 5-10 0 4 3 7 6 7-4 0-8 1-11 3z" stroke="#6c8fd8" />
            <path d="M17 28l7-7a3 3 0 0 1 5 3l-2 2M22 26l-3 5a3 3 0 0 1-5-3l2-2" />
          </svg>
          <span className="mt-[3px] leading-[20px]">Create</span>
          <span className="leading-[20px]">a PDF</span>
          <div className="self-stretch mt-auto"><GroupLabel text="Adobe Acrobat" /></div>
        </div>
        <div className="w-[76px] flex flex-col items-center border-r border-[#8c8c8c] shrink-0 text-[14px] text-[#3a3a3a]">
          <svg className="mt-[4px] shrink-0" width="36" height="36" viewBox="0 0 36 36" fill="none" stroke="#dd5b2b" strokeWidth="1.500">
            <rect x=".75" y=".75" width="34.500" height="34.500" strokeWidth="2" />
            <rect x="5" y="5" width="12" height="12" />
            <rect x="20" y="5" width="11" height="12" />
            <rect x="5" y="20" width="12" height="11" />
            <rect x="20" y="20" width="11" height="11" />
          </svg>
          <span className="mt-[5px] leading-[20px]">Add-ins</span>
          <div className="self-stretch mt-auto"><GroupLabel text="Add-ins" /></div>
        </div>
        <div className="flex-1 flex items-end justify-end pr-[12px] pb-[10px]">
          <svg width="12" height="7" viewBox="0 0 12 7" fill="none" stroke="#333" strokeWidth="1.200"><path d="M.5 1l5.500 5 5.500-5" /></svg>
        </div>
      </div>
      <RulerTop />
      <div className="flex flex-1 min-h-0">
        <RulerLeft />
        <Page />
        <Scrollbar />
      </div>
      <StatusBar />
      <Taskbar />
    </div>
  );
}
